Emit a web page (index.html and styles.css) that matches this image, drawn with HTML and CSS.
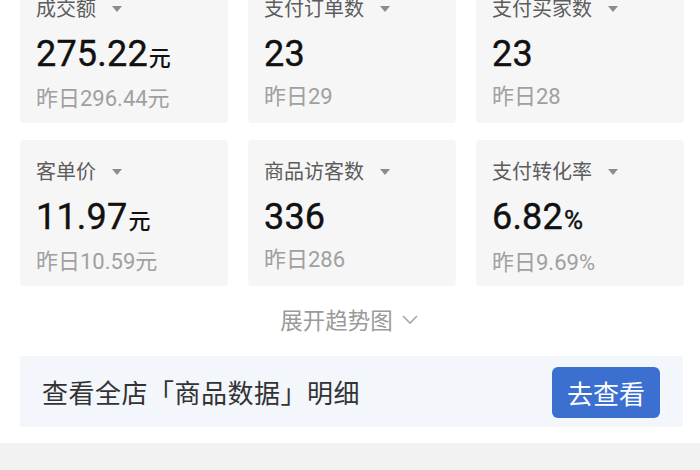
FILE: index.html
```html
<!DOCTYPE html>
<html lang="zh">
<head>
<meta charset="utf-8">
<link rel="stylesheet" href="styles.css">
</head>
<body>
<div class="page">
  <div class="grid">
    <div class="card">
      <div class="label">成交额<span class="tri"></span></div>
      <div class="value">275.22<span class="unit">元</span></div>
      <div class="sub">昨日296.44元</div>
    </div>
    <div class="card">
      <div class="label">支付订单数<span class="tri"></span></div>
      <div class="value">23</div>
      <div class="sub">昨日29</div>
    </div>
    <div class="card">
      <div class="label">支付买家数<span class="tri"></span></div>
      <div class="value">23</div>
      <div class="sub">昨日28</div>
    </div>
    <div class="card">
      <div class="label">客单价<span class="tri"></span></div>
      <div class="value">11.97<span class="unit">元</span></div>
      <div class="sub">昨日10.59元</div>
    </div>
    <div class="card">
      <div class="label">商品访客数<span class="tri"></span></div>
      <div class="value">336</div>
      <div class="sub">昨日286</div>
    </div>
    <div class="card">
      <div class="label">支付转化率<span class="tri"></span></div>
      <div class="value">6.82<span class="pct">%</span></div>
      <div class="sub">昨日9.69%</div>
    </div>
  </div>
  <div class="expand">展开趋势图<svg class="chev" width="20" height="12" viewBox="0 0 20 12"><path d="M3 2 L10 9 L17 2" fill="none" stroke="#a8a8a8" stroke-width="1.6"/></svg></div>
  <div class="banner">
    <span class="banner-text">查看全店「商品数据」明细</span>
    <span class="btn">去查看</span>
  </div>
  <div class="band"></div>
</div>
</body>
</html>
```
FILE: styles.css
```css
html, body {
  margin: 0;
  padding: 0;
  background: #ffffff;
}
body {
  width: 700px;
  height: 470px;
  overflow: hidden;
  font-family: Roboto, "Noto Sans CJK SC", sans-serif;
}
.page {
  display: flex;
  flex-direction: column;
}
.grid {
  display: grid;
  grid-template-columns: 208px 208px 208px;
  column-gap: 20px;
  row-gap: 17px;
  margin: -23px 0 0 20px;
}
.card {
  height: 146px;
  background: #f6f6f6;
  border-radius: 4px;
  padding: 19px 0 0 16px;
  box-sizing: border-box;
  display: flex;
  flex-direction: column;
}
.label {
  font-size: 20px;
  line-height: 24px;
  color: #5c5c5c;
  display: flex;
  align-items: center;
  font-family: "Noto Sans CJK SC", sans-serif;
}
.tri {
  width: 0;
  height: 0;
  border-left: 5px solid transparent;
  border-right: 5px solid transparent;
  border-top: 6px solid #8c8c8c;
  margin-left: 16px;
  margin-top: 2px;
}
.value {
  margin-top: 14px;
  font-size: 36px;
  line-height: 40px;
  color: #111111;
  font-weight: 400;
  letter-spacing: 0.2px;
  -webkit-text-stroke: 0.4px #111111;
}
.unit {
  font-size: 22px;
  font-family: "Noto Sans CJK SC", sans-serif;
  font-weight: 500;
  margin-left: 1px;
  -webkit-text-stroke: 0;
}
.pct {
  font-size: 26px;
  margin-left: 1px;
}
.sub {
  margin-top: 10px;
  font-size: 22px;
  line-height: 26px;
  color: #a0a0a0;
}
.expand {
  margin-top: 18px;
  align-self: center;
  display: flex;
  align-items: center;
  font-family: "Noto Sans CJK SC", sans-serif;
  font-size: 22.5px;
  line-height: 30px;
  color: #9a9a9a;
}
.chev {
  margin-left: 7px;
  margin-top: 2px;
}
.banner {
  margin: 22px 0 0 20px;
  width: 663px;
  height: 71px;
  background: #f3f6fb;
  border-radius: 2px;
  box-sizing: border-box;
  padding: 0 23px 0 22px;
  display: flex;
  align-items: center;
  justify-content: space-between;
}
.banner-text {
  font-family: "Noto Sans CJK SC", sans-serif;
  font-size: 26px;
  letter-spacing: 0.5px;
  color: #333333;
}
.btn {
  width: 108px;
  height: 51px;
  margin-top: 2px;
  background: #3c70d0;
  border-radius: 6px;
  color: #ffffff;
  font-family: "Noto Sans CJK SC", sans-serif;
  font-size: 26px;
  display: flex;
  align-items: center;
  justify-content: center;
}
.band {
  margin-top: 16px;
  height: 30px;
  background: #f2f2f2;
}
```
